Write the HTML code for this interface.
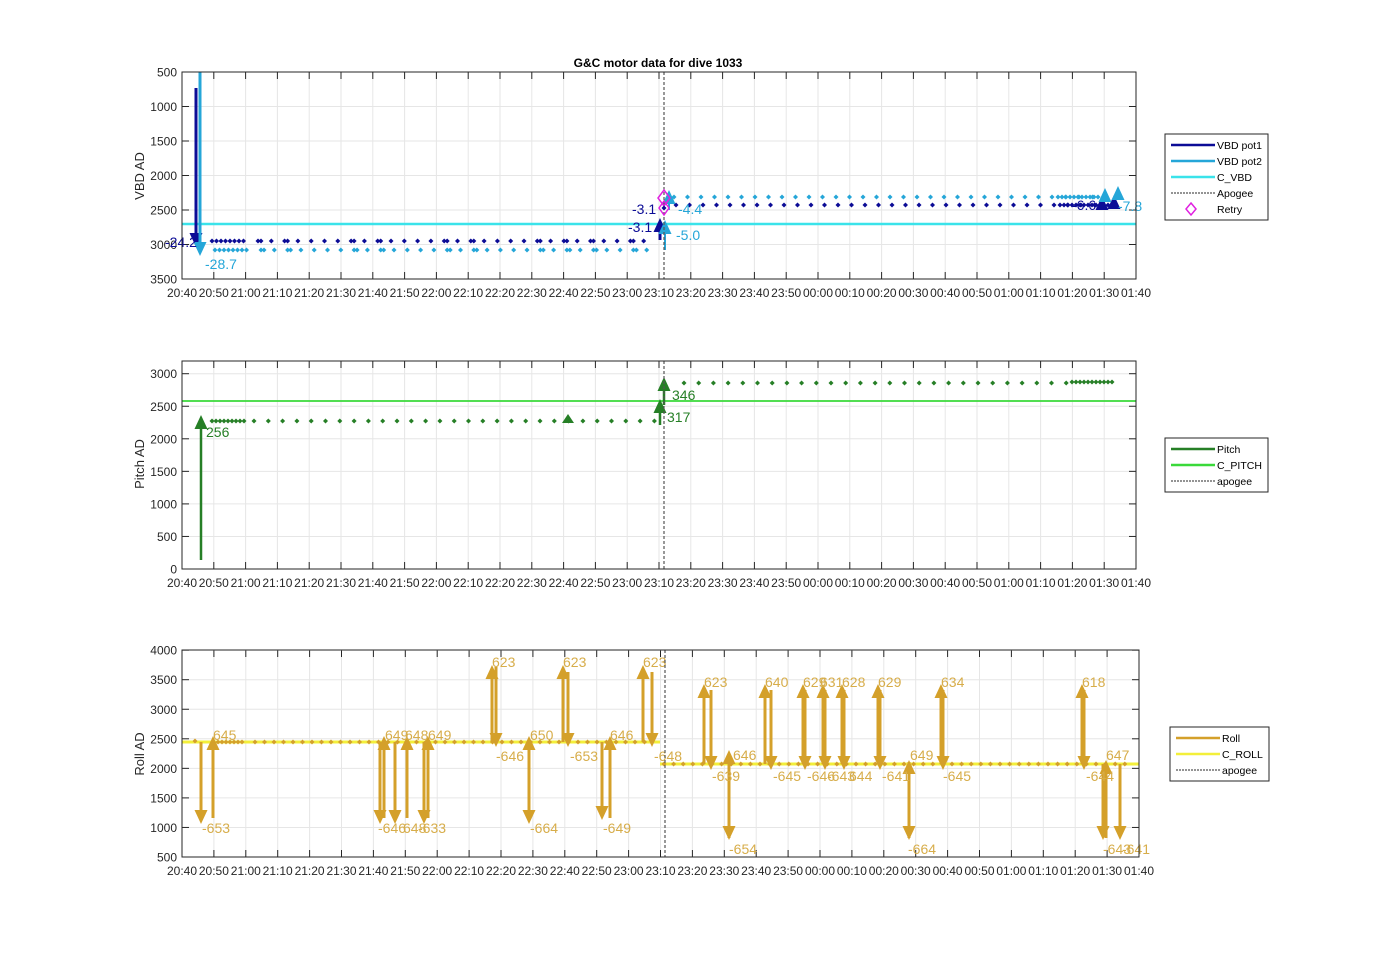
<!DOCTYPE html>
<html><head><meta charset="utf-8"><style>
html,body{margin:0;padding:0;background:#fff;}
svg{display:block;font-family:"Liberation Sans",Arial,sans-serif;}
</style></head><body>
<svg id="s" width="1400" height="964" xmlns="http://www.w3.org/2000/svg"></svg>
<script>
var S=document.getElementById('s'),out='';
function L(x1,y1,x2,y2,c,w,d){out+='<line x1="'+x1+'" y1="'+y1+'" x2="'+x2+'" y2="'+y2+'" stroke="'+c+'" stroke-width="'+w+'"'+(d?' stroke-dasharray="'+d+'"':'')+'/>';}
function T(x,y,t,c,s,a,b){out+='<text x="'+x+'" y="'+y+'" fill="'+c+'" font-size="'+s+'"'+(a?' text-anchor="'+a+'"':'')+(b?' font-weight="bold"':'')+'>'+t+'</text>';}
function D(x,y,c){out+='<path d="M'+x+' '+(y-2.5)+'L'+(x+2.5)+' '+y+'L'+x+' '+(y+2.5)+'L'+(x-2.5)+' '+y+'Z" fill="'+c+'"/>';}
function A(x,y1,y2,c,w){
 var dir=y2<y1?-1:1;L(x,y1,x,y2-dir*12,c,w||3);
 out+='<path d="M'+(x-6.5)+' '+(y2-dir*14)+'L'+(x+6.5)+' '+(y2-dir*14)+'L'+x+' '+y2+'Z" fill="'+c+'"/>';}
var times=['20:40','20:50','21:00','21:10','21:20','21:30','21:40','21:50','22:00','22:10','22:20','22:30','22:40','22:50','23:00','23:10','23:20','23:30','23:40','23:50','00:00','00:10','00:20','00:30','00:40','00:50','01:00','01:10','01:20','01:30','01:40'];
function axes(x0,x1,y0,y1,yt){
 var n=30,dx=(x1-x0)/n;
 for(var i=0;i<=n;i++){var x=x0+i*dx;L(x,y0,x,y1,'#e6e6e6',1);L(x,y1,x,y1-7,'#262626',1);L(x,y0,x,y0+7,'#262626',1);T(x,y1+18,times[i],'#262626',12,'middle');}
 yt.forEach(function(t){L(x0,t[0],x1,t[0],'#e6e6e6',1);L(x0,t[0],x0+7,t[0],'#262626',1);L(x1,t[0],x1-7,t[0],'#262626',1);T(x0-5,t[0]+4.5,t[1],'#262626',12,'end');});
}
function box(x0,x1,y0,y1){out+='<rect x="'+x0+'" y="'+y0+'" width="'+(x1-x0)+'" height="'+(y1-y0)+'" fill="none" stroke="#262626" stroke-width="1"/>';}
var B1='#0c0c96',B2='#25a6d8',CV='#3ae3ea';
var yt1=[];for(var v=500;v<=3500;v+=500)yt1.push([72+(v-500)*207/3000,v]);
axes(182,1136,72,279,yt1);
L(182,224,1136,224,CV,2.5);
var xs=[];for(var x=212;x<=245;x+=4.5)xs.push(x);
for(var x=258;x<=655;x+=13.3){xs.push(x);if(Math.round(x)%3==0)xs.push(x+3);}
xs.forEach(function(x){D(x,241,B1);D(x+3,250,B2);});
var xs2=[];for(var x=676;x<=1120;x+=13.5)xs2.push(x);
for(var x=1060;x<=1100;x+=4)xs2.push(x);
xs2.forEach(function(x,i){D(x,205,B1);D(x-2,197,B2);});
A(196,88,247,B1,3);A(200,72,256,B2,3);
A(660,240,218,B1,3);A(665,250,220,B2,2);A(669,210,190,B2,2);
A(1102,205,196,B1,2);A(1114,205,195,B1,2);A(1105,197,188,B2,2);A(1118,197,186,B2,2);
L(664,72,664,279,'#555',1.2,'3,2');
out+='<path d="M664 190L670 198L664 206L658 198Z" fill="none" stroke="#e020e0" stroke-width="1.5"/>';
out+='<path d="M664 201L669 208L664 215L659 208Z" fill="none" stroke="#e020e0" stroke-width="1.5"/>';
D(664,208,B1);
T(165,247,'-24.2',B1,14);T(205,269,'-28.7',B2,14);T(632,214,'-3.1',B1,14);T(628,232,'-3.1',B1,14);
T(678,214,'-4.4',B2,14);T(676,240,'-5.0',B2,14);T(1072,210,'-6.6',B1,14);T(1118,211,'-7.8',B2,14);
T(658,67,'G&amp;C motor data for dive 1033','#000',12,'middle',1);
out+='<text transform="translate(144,176) rotate(-90)" fill="#262626" font-size="13" text-anchor="middle">VBD AD</text>';
box(182,1136,72,279);
var G='#267f26',GC='#3ad93a';
var yt2=[];for(var v=0;v<=3000;v+=500)yt2.push([569-v*0.0651,v]);
axes(182,1136,361,569,yt2);
L(182,401,1136,401,GC,1.8);
for(var x=212;x<=245;x+=4)D(x,421,G);
for(var x=254;x<=655;x+=14.3)D(x,421,G);
for(var x=684;x<=1068;x+=14.7)D(x,383,G);
for(var x=1072;x<=1115;x+=4)D(x,382,G);
A(201,560,415,G,2.5);A(660,425,399,G,2.5);A(664,405,377,G,2.5);
out+='<path d="M562 423L568 414L574 423Z" fill="'+G+'"/>';
L(664,361,664,569,'#555',1.2,'3,2');
T(206,437,'256',G,14);T(667,422,'317',G,14);T(672,400,'346',G,14);
out+='<text transform="translate(144,464) rotate(-90)" fill="#262626" font-size="13" text-anchor="middle">Pitch AD</text>';
box(182,1136,361,569);
var R='#d4a02a',RL='#d7ad4a',RC='#f3ef3a';
var yt3=[];for(var v=500;v<=4000;v+=500)yt3.push([857-(v-500)*0.0591,v]);
axes(182,1139,650,857,yt3);
L(182,742,660,742,RC,3);L(660,764,1139,764,RC,3);
D(195,741,R);for(var x=218;x<=245;x+=4)D(x,742,R);for(var x=255;x<=650;x+=9.5)D(x,742,R);
for(var x=664;x<=1130;x+=9.6)D(x,764,R);
var arr=[[201,742,824],[213,818,736],[380,742,824],[384,818,736],[395,742,824],[407,818,736],[424,742,824],[428,818,736],
[492,742,665],[496,667,747],[529,818,736],[529,742,824],[563,742,665],[568,672,747],[602,742,820],[610,818,736],[643,742,665],[652,672,747],
[704,764,684],[711,690,770],[729,838,750],[729,760,840],[765,764,684],[771,690,770],[803,764,684],[805,690,770],[823,764,684],[825,690,770],
[842,764,684],[844,690,770],[878,764,684],[880,690,770],[909,838,760],[909,762,840],[941,764,684],[943,690,770],[1082,764,684],[1084,690,770],
[1103,764,840],[1106,838,760],[1120,764,840]];
arr.forEach(function(a){A(a[0],a[1],a[2],R,3);});
var lb=[[202,833,'-653'],[213,740,'645'],[385,740,'649'],[405,740,'648'],[428,740,'649'],[378,833,'-646'],[403,833,'648'],[418,833,'-633'],
[492,667,'623'],[496,761,'-646'],[530,740,'650'],[530,833,'-664'],[563,667,'623'],[570,761,'-653'],[603,833,'-649'],[610,740,'646'],[643,667,'623'],[654,761,'-648'],
[704,687,'623'],[712,781,'-639'],[733,760,'646'],[729,854,'-654'],[765,687,'640'],[773,781,'-645'],[803,687,'629'],[807,781,'-646'],[820,687,'631'],[827,781,'-643'],
[842,687,'628'],[849,781,'644'],[878,687,'629'],[882,781,'-641'],[910,760,'649'],[908,854,'-664'],[941,687,'634'],[943,781,'-645'],[1082,687,'618'],[1086,781,'-644'],
[1106,760,'647'],[1103,854,'-643'],[1122,854,'-641']];
lb.forEach(function(l){T(l[0],l[1],l[2],RL,14);});
L(665,650,665,857,'#555',1.2,'3,2');
out+='<text transform="translate(144,754) rotate(-90)" fill="#262626" font-size="13" text-anchor="middle">Roll AD</text>';
box(182,1139,650,857);
function legend(x,y,w,items){
 var h=items.length*16+6;out+='<rect x="'+x+'" y="'+y+'" width="'+w+'" height="'+h+'" fill="#fff" stroke="#262626" stroke-width="1"/>';
 items.forEach(function(it,i){var yy=y+11+i*16;
  if(it[2]=='d')out+='<path d="M'+(x+26)+' '+(yy-6)+'L'+(x+31)+' '+yy+'L'+(x+26)+' '+(yy+6)+'L'+(x+21)+' '+yy+'Z" fill="none" stroke="#e020e0" stroke-width="1.5"/>';
  else L(x+6,yy,x+50,yy,it[1],it[2]=='-'?1.2:2.5,it[2]=='-'?'2,1':null);
  T(x+52,yy+4,it[0],'#000',10.5);});
}
legend(1165,134,103,[['VBD pot1',B1],['VBD pot2',B2],['C_VBD',CV],['Apogee','#555','-'],['Retry','','d']]);
legend(1165,438,103,[['Pitch',G],['C_PITCH',GC],['apogee','#555','-']]);
legend(1170,727,99,[['Roll',R],['C_ROLL',RC],['apogee','#555','-']]);
S.innerHTML=out;
</script>
</body></html>
